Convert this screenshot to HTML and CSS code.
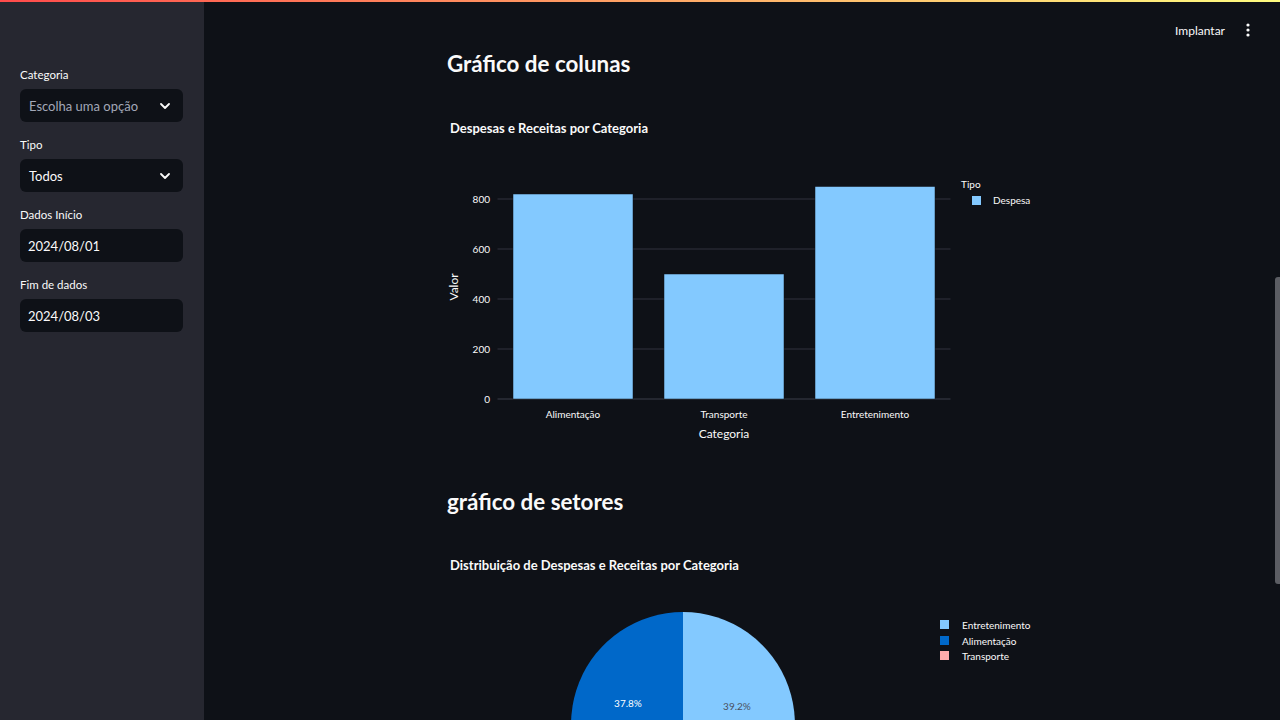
FILE: index.html
```html
<!DOCTYPE html>
<html lang="pt">
<head>
<meta charset="utf-8">
<title>Dashboard</title>
<link rel="stylesheet" href="styles.css">
</head>
<body>
<div class="decoration"></div>
<aside class="sidebar">
  <div class="field">
    <label class="field-label">Categoria</label>
    <div class="input select placeholder"><span>Escolha uma opção</span>
      <svg class="chev" width="10" height="6" viewBox="0 0 10 6"><path d="M1 1l4 4 4-4" fill="none" stroke="#fafafa" stroke-width="1.8" stroke-linecap="round" stroke-linejoin="round"/></svg>
    </div>
  </div>
  <div class="field">
    <label class="field-label">Tipo</label>
    <div class="input select"><span>Todos</span>
      <svg class="chev" width="10" height="6" viewBox="0 0 10 6"><path d="M1 1l4 4 4-4" fill="none" stroke="#fafafa" stroke-width="1.8" stroke-linecap="round" stroke-linejoin="round"/></svg>
    </div>
  </div>
  <div class="field">
    <label class="field-label">Dados Início</label>
    <div class="input date"><span>2024/08/01</span></div>
  </div>
  <div class="field">
    <label class="field-label">Fim de dados</label>
    <div class="input date"><span>2024/08/03</span></div>
  </div>
</aside>
<main class="main">
  <header class="topbar">
    <span class="deploy">Implantar</span>
    <svg class="kebab" width="4" height="14" viewBox="0 0 4 14"><circle cx="2" cy="2" r="1.6" fill="#fafafa"/><circle cx="2" cy="7" r="1.6" fill="#fafafa"/><circle cx="2" cy="12" r="1.6" fill="#fafafa"/></svg>
  </header>
  <div class="block">
    <h2 class="heading">Gráfico de colunas</h2>
    <svg class="chart bar-chart" width="590" height="350" viewBox="0 0 590 350">
      <text class="ctitle" x="3" y="33">Despesas e Receitas por Categoria</text>
      <g class="grid">
        <line x1="50.5" x2="503.5" y1="99" y2="99"/>
        <line x1="50.5" x2="503.5" y1="149" y2="149"/>
        <line x1="50.5" x2="503.5" y1="199" y2="199"/>
        <line x1="50.5" x2="503.5" y1="249" y2="249"/>
      </g>
      <line class="zero" x1="50.5" x2="503.5" y1="299" y2="299"/>
      <g class="ticks">
        <text x="43" y="103">800</text>
        <text x="43" y="153">600</text>
        <text x="43" y="203">400</text>
        <text x="43" y="253">200</text>
        <text x="43" y="303">0</text>
      </g>
      <g class="bars">
        <rect x="66" y="94" width="120" height="205"/>
        <rect x="217" y="174" width="120" height="125"/>
        <rect x="368" y="86.5" width="120" height="212.5"/>
      </g>
      <g class="xticks">
        <text x="126" y="318">Alimentação</text>
        <text x="277" y="318">Transporte</text>
        <text x="428" y="318">Entretenimento</text>
      </g>
      <text class="axis-title" x="277" y="338">Categoria</text>
      <text class="axis-title" transform="translate(11 187) rotate(-90)">Valor</text>
      <text class="legend-title" x="514" y="88">Tipo</text>
      <rect class="sw" x="525" y="96" width="9" height="9" fill="#83c9ff"/>
      <text class="legend" x="546" y="104">Despesa</text>
    </svg>
    <h2 class="heading second">gráfico de setores</h2>
    <svg class="chart pie-chart" width="590" height="300" viewBox="0 0 590 300">
      <text class="ctitle" x="3" y="33">Distribuição de Despesas e Receitas por Categoria</text>
      <path d="M236 187 L236 75 A112 112 0 0 1 306.3 274.1 Z" fill="#83c9ff"/>
      <path d="M236 187 L236 75 A112 112 0 0 0 158.4 267.7 Z" fill="#0068c9"/>
      <path d="M236 187 L306.3 274.1 A112 112 0 0 1 158.4 267.7 Z" fill="#ffabab"/>
      <text class="plabel light" x="181" y="170">37.8%</text>
      <text class="plabel dark" x="290" y="173">39.2%</text>
      <rect x="493" y="83" width="9" height="9" fill="#83c9ff"/>
      <text class="legend" x="515" y="92">Entretenimento</text>
      <rect x="493" y="99" width="9" height="9" fill="#0068c9"/>
      <text class="legend" x="515" y="108">Alimentação</text>
      <rect x="493" y="114" width="9" height="9" fill="#ffabab"/>
      <text class="legend" x="515" y="123">Transporte</text>
    </svg>
  </div>
  <div class="scroll-thumb"></div>
</main>
</body>
</html>
```

FILE: styles.css
```css
html, body {
  margin: 0;
  padding: 0;
  height: 720px;
  overflow: hidden;
  background: #0e1117;
  color: #fafafa;
  font-family: Lato, "Noto Sans", sans-serif;
}

body {
  display: flex;
  position: relative;
}

.decoration {
  position: absolute;
  top: 0;
  left: 0;
  right: 0;
  height: 2px;
  background: linear-gradient(90deg, #ff4b4b, #fffd80);
  z-index: 5;
}

.sidebar {
  width: 204px;
  flex: none;
  height: 720px;
  background: #262730;
  box-sizing: border-box;
  padding: 67px 21px 0 20px;
  display: flex;
  flex-direction: column;
  gap: 15px;
}

.field {
  display: flex;
  flex-direction: column;
  gap: 6px;
}

.field-label {
  font-size: 11.5px;
  line-height: 16px;
  color: #fafafa;
}

.input {
  height: 33px;
  border-radius: 6px;
  background: #0e1117;
  display: flex;
  align-items: center;
  justify-content: space-between;
  box-sizing: border-box;
  font-size: 13px;
}

.select {
  padding: 0 13px 0 9px;
}

.date {
  padding: 0 8px;
}

.placeholder span {
  color: #a3a8b8;
}

.main {
  flex: 1;
  position: relative;
  height: 720px;
  overflow: hidden;
}

.topbar {
  position: absolute;
  top: 20px;
  right: 30px;
  display: flex;
  align-items: center;
  gap: 21px;
  height: 20px;
}

.deploy {
  font-size: 12px;
}

.block {
  width: 590px;
  margin: 0 auto;
  padding-top: 49px;
}

.heading {
  margin: 0;
  font-size: 22.4px;
  line-height: 30px;
  font-weight: 700;
  height: 30px;
}

.heading.second {
  margin-top: 37px;
  height: 30px;
}

.chart {
  display: block;
  margin-top: 21px;
  font-family: Lato, "Noto Sans", sans-serif;
}

.pie-chart {
  margin-top: 20px;
}

.ctitle {
  fill: #fafafa;
  font-size: 13px;
  font-weight: 700;
}

.grid line {
  stroke: #31333f;
  stroke-width: 1;
}

.zero {
  stroke: #3b3e4a;
  stroke-width: 1;
}

.ticks text {
  fill: #fafafa;
  font-size: 10px;
  text-anchor: end;
}

.bars rect {
  fill: #83c9ff;
  stroke: #0e1117;
  stroke-width: 0.5;
}

.xticks text {
  fill: #fafafa;
  font-size: 10px;
  text-anchor: middle;
}

.axis-title {
  fill: #fafafa;
  font-size: 12px;
  text-anchor: middle;
}

.legend-title, .legend {
  fill: #fafafa;
  font-size: 10px;
}

.plabel {
  font-size: 10px;
  text-anchor: middle;
}

.plabel.light {
  fill: #ffffff;
}

.plabel.dark {
  fill: #4a5060;
}

.scroll-thumb {
  position: absolute;
  right: 0;
  top: 277px;
  width: 5px;
  height: 307px;
  background: #5b5d63;
  border-radius: 3px 0 0 3px;
}
```
